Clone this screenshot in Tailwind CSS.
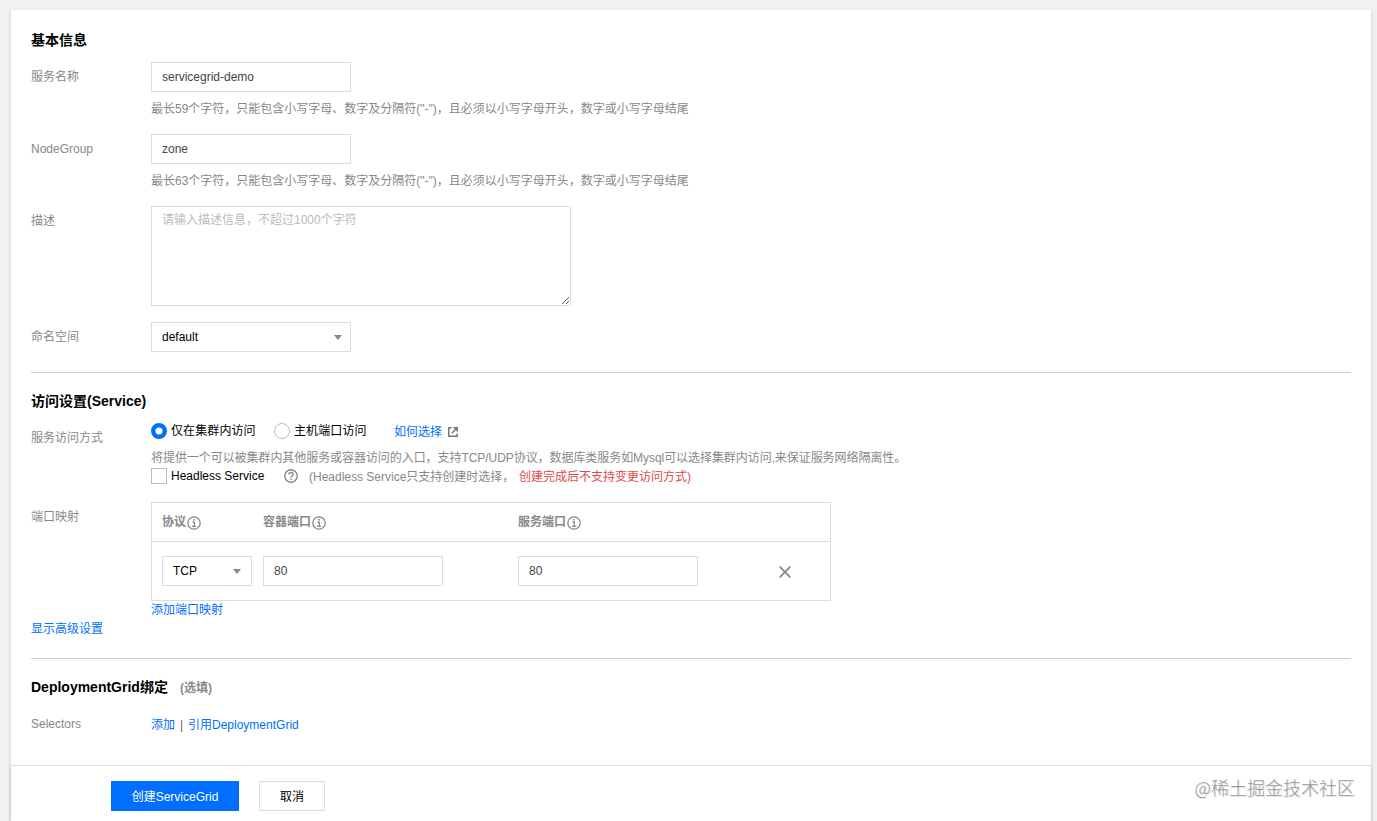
<!DOCTYPE html>
<html lang="zh-CN">
<head>
<meta charset="utf-8">
<title>ServiceGrid</title>
<script src="https://cdn.jsdelivr.net/npm/@tailwindcss/browser@4"></script>
</head>
<body class="h-[821px] overflow-hidden bg-[#f1f1f1] pt-[10px] pl-[11px] pr-[6px] font-['Liberation_Sans','Noto_Sans_CJK_SC',sans-serif] text-xs leading-[18px] text-[#888]">
<svg class="hidden">
  <symbol id="info" viewBox="0 0 14 14"><g fill="none" stroke="currentColor" stroke-width="1.3"><circle cx="7" cy="7" r="6.2"/><path d="M5.3 6.1H7.3V10.4M5 10.4H9.2"/></g><rect x="6.1" y="3" width="1.6" height="1.6" fill="currentColor"/></symbol>
  <symbol id="caret" viewBox="0 0 8 5"><path d="M0 0H8L4 5Z" fill="currentColor"/></symbol>
</svg>
<div class="flex h-[811px] flex-col bg-white shadow-[0_2px_4px_rgba(54,58,80,.2)]">
  <main class="flex h-[755px] flex-col px-5">
    <h2 class="mt-5 h-5 text-sm leading-5 font-bold text-black">基本信息</h2>

    <div class="mt-3 flex h-[72px]">
      <label class="w-[120px] pt-[6px]">服务名称</label>
      <div>
        <input class="block h-[30px] w-[200px] border border-[#ddd] px-[10px] text-[#444] outline-none" value="servicegrid-demo">
        <p class="pt-2 whitespace-nowrap">最长59个字符，只能包含小写字母、数字及分隔符("-")，且必须以小写字母开头，数字或小写字母结尾</p>
      </div>
    </div>
    <div class="flex h-[72px]">
      <label class="w-[120px] pt-[6px]">NodeGroup</label>
      <div>
        <input class="block h-[30px] w-[200px] border border-[#ddd] px-[10px] text-[#444] outline-none" value="zone">
        <p class="pt-2 whitespace-nowrap">最长63个字符，只能包含小写字母、数字及分隔符("-")，且必须以小写字母开头，数字或小写字母结尾</p>
      </div>
    </div>
    <div class="flex h-[116px]">
      <label class="w-[120px] pt-[6px]">描述</label>
      <textarea class="h-[100px] w-[420px] resize border border-[#ddd] px-[10px] py-[4px] outline-none placeholder:text-[#bbb]" placeholder="请输入描述信息，不超过1000个字符"></textarea>
    </div>
    <div class="flex h-[50px] border-b border-[#ccc] box-content">
      <label class="w-[120px] pt-[6px]">命名空间</label>
      <div class="flex h-[30px] w-[200px] items-center justify-between border border-[#ddd] pr-[8px] pl-[10px] text-black">default<svg class="h-[5px] w-2 text-[#888]"><use href="#caret"/></svg></div>
    </div>

    <h2 class="mt-[18px] h-5 text-sm leading-5 font-bold text-black">访问设置(Service)</h2>
    <div class="mt-[10px] flex h-[81px]">
      <label class="w-[120px] pt-2">服务访问方式</label>
      <div class="whitespace-nowrap">
        <div class="flex h-5 items-center text-black">
          <svg class="size-4" viewBox="0 0 16 16"><circle cx="8" cy="8" r="5.8" fill="#fff" stroke="#006eff" stroke-width="4.4"/></svg><span class="ml-1 w-[103px] tracking-[.1px]">仅在集群内访问</span>
          <span class="size-4 rounded-full border border-[#bbb]"></span><span class="ml-1 w-[100px] tracking-[.1px]">主机端口访问</span>
          <a class="pt-px text-[#006eff]">如何选择</a>
          <svg class="mt-[2px] ml-[6px] size-[10px] text-[#777]" viewBox="0 0 11 11" fill="none" stroke="currentColor" stroke-width="1.7"><path d="M4 .9H.9V10.1H10.1V7.2M6 .9H10.1V5M10 1L4.2 6.8"/></svg>
        </div>
        <p class="mt-2 h-[18px] tracking-[-.06px]">将提供一个可以被集群内其他服务或容器访问的入口，支持TCP/UDP协议，数据库类服务如Mysql可以选择集群内访问,来保证服务网络隔离性。</p>
        <div class="mt-[-1px] flex h-5 items-center">
          <span class="size-4 border border-[#bbb]"></span><span class="ml-1 w-[113px] text-black">Headless Service</span>
          <svg class="size-[14px]" viewBox="0 0 14 14" fill="none" stroke="currentColor" stroke-width="1.4"><circle cx="7" cy="7" r="6.2"/><path d="M4.9 5.6C4.9 4.2 5.8 3.5 7 3.5S9.1 4.2 9.1 5.4C9.1 6.7 7 6.8 7 8.4M7 9.5V10.9"/></svg>
          <span class="mt-px ml-[11px] w-[210px]">(Headless Service只支持创建时选择，</span><span class="mt-px text-[#e04848]">创建完成后不支持变更访问方式)</span>
        </div>
      </div>
    </div>
    <div class="flex h-[117px]">
      <label class="w-[120px] pt-[6px]">端口映射</label>
      <div>
        <div class="h-[99px] w-[680px] border border-[#ddd]">
          <div class="grid h-[39px] grid-cols-[101px_255px_1fr] items-center border-b border-[#ddd] pl-[10px] font-bold">
            <div class="flex items-center">协议<svg class="mt-px ml-[1px] size-[14px]"><use href="#info"/></svg></div>
            <div class="flex items-center">容器端口<svg class="mt-px ml-[1px] size-[14px]"><use href="#info"/></svg></div>
            <div class="flex items-center">服务端口<svg class="mt-px ml-[1px] size-[14px]"><use href="#info"/></svg></div>
          </div>
          <div class="grid h-[58px] grid-cols-[101px_255px_261px_1fr] items-center pl-[10px]">
            <div class="flex h-[30px] w-[90px] items-center justify-between border border-[#ddd] pr-[10px] pl-[10px] text-black">TCP<svg class="h-[5px] w-2 text-[#888]"><use href="#caret"/></svg></div>
            <input class="h-[30px] w-[180px] border border-[#ddd] px-[10px] text-[#444] outline-none" value="80">
            <input class="h-[30px] w-[180px] border border-[#ddd] px-[10px] text-[#444] outline-none" value="80">
            <svg class="mt-px size-3" viewBox="0 0 12 12" fill="none" stroke="currentColor" stroke-width="1.8"><path d="M.7 .7L11.3 11.3M11.3 .7L.7 11.3"/></svg>
          </div>
        </div>
        <a class="block text-[#006eff]">添加端口映射</a>
      </div>
    </div>
    <div class="h-[39px] border-b border-[#ccc] box-content"><a class="block pt-px text-[#006eff]">显示高级设置</a></div>

    <h2 class="mt-[18px] flex h-5 items-center text-sm leading-5 font-bold text-black">DeploymentGrid绑定<span class="mt-px ml-3 text-xs text-[#888]">(选填)</span></h2>
    <div class="mt-[18px] flex">
      <label class="w-[120px]">Selectors</label>
      <div class="flex pt-px whitespace-pre"><a class="text-[#006eff]">添加</a><span class="w-[13px] text-center text-[#666]">|</span><a class="text-[#006eff]">引用DeploymentGrid</a></div>
    </div>
  </main>
  <footer class="flex h-[56px] items-start border-t border-[#ddd] pt-[15px] pl-[100px] shadow-[0_2px_3px_rgba(0,0,0,.2)]">
    <button class="h-[30px] w-32 bg-[#006eff] pt-px text-white">创建ServiceGrid</button>
    <button class="ml-5 h-[30px] w-[66px] border border-[#ddd] pt-px text-black">取消</button>
    <span class="mt-[-8px] mr-4 ml-auto font-['Noto_Sans_CJK_SC',sans-serif] text-[18px] leading-[28px] font-light text-[#999] [text-shadow:1px_1px_1px_rgba(0,0,0,.15)]">@稀土掘金技术社区</span>
  </footer>
</div>
</body>
</html>
